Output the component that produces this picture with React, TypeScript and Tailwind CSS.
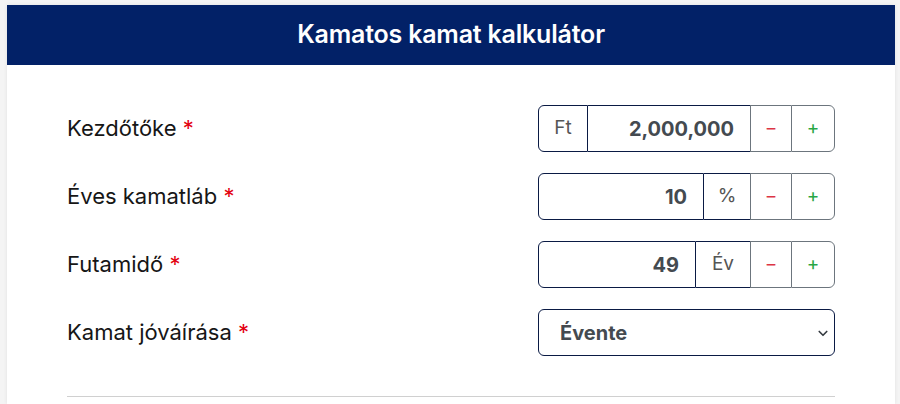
import React from "react";

const font = { fontFamily: "Inter, 'Noto Sans', sans-serif" };

const Label = ({ text }: { text: string }) => (
    <span className="text-[22px] text-[#161616]">
        {text} <span className="text-[#e3000f]">*</span>
    </span>
);

const StepButtons = () => (
    <>
        <button className="w-[41px] h-full flex items-center justify-center border-y border-l border-[#6c757d] text-[#dc3545] text-[19px]">
            −
        </button>
        <button className="w-[44px] h-full flex items-center justify-center border border-[#6c757d] rounded-r-[6px] text-[#28a745] text-[19px]">
            +
        </button>
    </>
);

const App = () => {
    return (
        <div className="w-[900px] h-[404px] bg-[#f4f4f4] pt-[5px] pl-[7px] pr-[5px] overflow-hidden" style={font}>
            <div className="bg-white h-full shadow-[0_0_4px_rgba(0,0,0,0.08)]">
                {/* Header */}
                <div className="h-[60px] bg-[#022167] flex items-center justify-center">
                    <h1 className="text-white text-[25px] font-semibold tracking-[-0.2px]">Kamatos kamat kalkulátor</h1>
                </div>

                {/* Form */}
                <div className="px-[60px] pt-[40px]">
                    <div className="flex flex-col gap-[21px]">
                        {/* Kezdőtőke */}
                        <div className="flex items-center justify-between h-[47px]">
                            <Label text="Kezdőtőke" />
                            <div className="flex h-full w-[297px]">
                                <div className="w-[50px] flex items-center justify-center border border-[#0a1a44] rounded-l-[6px] text-[19px] text-[#555555]">
                                    Ft
                                </div>
                                <div className="flex-1 flex items-center justify-end pr-[16px] border-y border-[#0a1a44] text-[20px] font-bold text-[#444a50]">
                                    2,000,000
                                </div>
                                <StepButtons />
                            </div>
                        </div>

                        {/* Éves kamatláb */}
                        <div className="flex items-center justify-between h-[47px]">
                            <Label text="Éves kamatláb" />
                            <div className="flex h-full w-[297px]">
                                <div className="flex-1 flex items-center justify-end pr-[16px] border border-[#0a1a44] rounded-l-[6px] text-[20px] font-bold text-[#444a50]">
                                    10
                                </div>
                                <div className="w-[46px] flex items-center justify-center border-y border-[#0a1a44] text-[19px] text-[#555555]">
                                    %
                                </div>
                                <StepButtons />
                            </div>
                        </div>

                        {/* Futamidő */}
                        <div className="flex items-center justify-between h-[47px]">
                            <Label text="Futamidő" />
                            <div className="flex h-full w-[297px]">
                                <div className="flex-1 flex items-center justify-end pr-[16px] border border-[#0a1a44] rounded-l-[6px] text-[20px] font-bold text-[#444a50]">
                                    49
                                </div>
                                <div className="w-[54px] flex items-center justify-center border-y border-[#0a1a44] text-[19px] text-[#555555]">
                                    Év
                                </div>
                                <StepButtons />
                            </div>
                        </div>

                        {/* Kamat jóváírása */}
                        <div className="flex items-center justify-between h-[47px]">
                            <Label text="Kamat jóváírása" />
                            <div className="relative w-[297px] h-full">
                                <select
                                    defaultValue="Évente"
                                    className="w-full h-full appearance-none border border-[#0a1a44] rounded-[6px] pl-[21px] pr-10 text-[20px] font-bold text-[#444a50] bg-white outline-none"
                                >
                                    <option>Évente</option>
                                    <option>Havonta</option>
                                    <option>Negyedévente</option>
                                </select>
                                <svg
                                    className="absolute right-[6px] top-1/2 -translate-y-1/2 pointer-events-none"
                                    width="12"
                                    height="12"
                                    viewBox="0 0 16 16"
                                    fill="none"
                                    stroke="#343a40"
                                    strokeWidth="2.2"
                                    strokeLinecap="round"
                                    strokeLinejoin="round"
                                >
                                    <path d="M3 6l5 5 5-5" />
                                </svg>
                            </div>
                        </div>
                    </div>

                    <div className="mt-[40px] border-t border-[#d0d0d0]" />
                </div>
            </div>
        </div>
    );
};

export default App;
